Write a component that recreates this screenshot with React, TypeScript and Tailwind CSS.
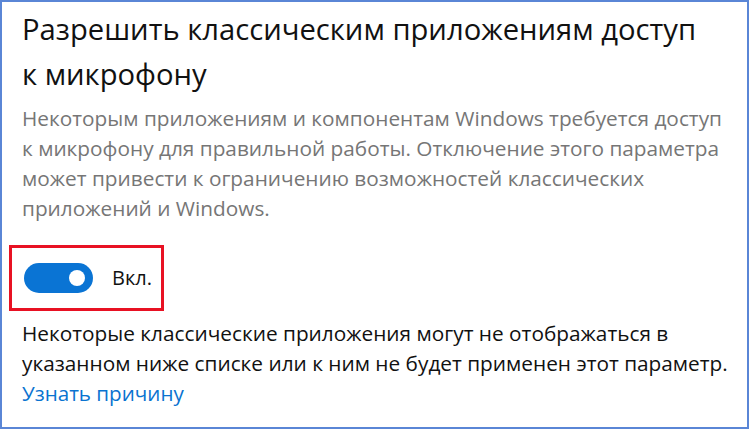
export default function App() {
  return (
    <div
      className="w-[749px] h-[429px] bg-white border-2 border-[#5a86d6] overflow-hidden"
      style={{ fontFamily: '"Open Sans", "Noto Sans", sans-serif' }}
    >
      <div className="pl-[20px] pt-[5px]">
        <h1 className="text-[29.2px] leading-[45px] text-[#111] font-normal">
          Разрешить классическим приложениям доступ
          <br />к микрофону
        </h1>

        <p className="mt-[6px] text-[20.8px] leading-[30px] text-[#767676]">
          Некоторым приложениям и компонентам Windows требуется доступ
          <br />к микрофону для правильной работы. Отключение этого параметра
          <br />может привести к ограничению возможностей классических
          <br />приложений и Windows.
        </p>

        {/* toggle, highlighted */}
        <div className="-ml-[13px] mt-[22px] inline-flex items-center gap-[19px] border-[3px] border-[#e81123] pl-[12px] pr-[9px] h-[66px]">
          <button className="relative w-[69px] h-[30px] rounded-full bg-[#0a74d4] flex items-center justify-end pr-[8px]">
            <span className="block w-[16px] h-[16px] rounded-full bg-white" />
          </button>
          <span className="text-[20px] text-[#111]">Вкл.</span>
        </div>

        <p className="mt-[7px] text-[20.8px] leading-[30px] text-[#111]">
          Некоторые классические приложения могут не отображаться в
          <br />
          указанном ниже списке или к ним не будет применен этот параметр.
        </p>
        <a href="#" className="block text-[20.6px] leading-[30px] text-[#0a73d0]">
          Узнать причину
        </a>
      </div>
    </div>
  );
}
